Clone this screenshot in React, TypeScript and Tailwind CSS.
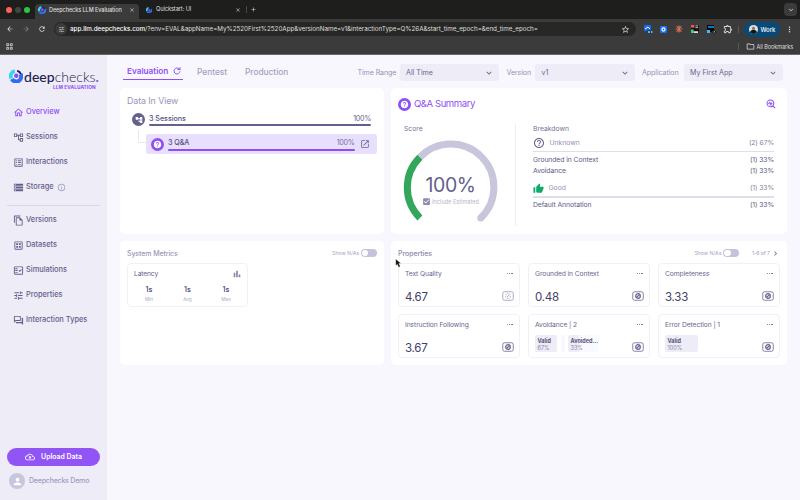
import React from "react";
import {
  MdOutlineHome, MdOutlineAccountTree, MdAccountTree, MdOutlineListAlt, MdStorage, MdInfoOutline, MdOutlineFileCopy,
  MdOutlineDataset, MdOutlineFactCheck, MdTune, MdOutlineQuestionAnswer, MdOutlineCloudUpload, MdPerson,
  MdOpenInNew, MdHelpOutline, MdThumbUp, MdRefresh, MdBarChart, MdChevronRight,
  MdKeyboardArrowDown, MdArrowBack, MdArrowForward, MdStarBorder, MdOutlineExtension, MdMoreVert,
  MdOutlineFolder, MdClose, MdAdd, MdCheckBox, MdHelp,
} from "react-icons/md";
import type { IconType } from "react-icons";

function Logo({ className }: { className: string }) {
  return (
    <svg viewBox="0 0 24 24" className={className} fill="none">
      <path d="M10 3.500A8.500 8.500 0 0 0 4 16" stroke="#35d5f2" strokeWidth="6.500" />
      <path d="M5 17A8.500 8.500 0 0 0 20 9" stroke="#2f6df0" strokeWidth="7" />
      <path d="M14 3.200A9 9 0 0 1 20.500 9" stroke="#221a63" strokeWidth="3.500" />
      <circle cx="12.500" cy="11.500" r="3.800" fill="#8d4df6" />
    </svg>
  );
}

function Reload({ className }: { className: string }) {
  return (
    <svg viewBox="0 0 24 24" className={className} fill="none" stroke="currentColor" strokeWidth="3" strokeLinecap="round" strokeLinejoin="round">
      <path d="M21 14a9 9 0 1 1-2.500-8.500L21 8" /><path d="M21 2v6h-6" />
    </svg>
  );
}

function Chrome() {
  return (
    <header className="h-[55px] shrink-0 border-b border-[#686868] bg-[#3b3b3b] text-[#dedede]">
      <div className="flex h-[19px] items-start bg-[#1e1f1c]">
        <div className="flex h-[19px] w-[35px] items-center gap-[3px] pl-[6px]">
          <i className="size-[6px] rounded-full bg-[#ff5f57]" />
          <i className="size-[6px] rounded-full bg-[#454545]" />
          <i className="size-[6px] rounded-full bg-[#28c840]" />
        </div>
        <div className="mt-[4px] flex h-[15px] w-[104px] items-center rounded-t-[4px] bg-[#3b3b3b] pb-[3px] pl-[3px]">
          <Logo className="size-[8px] shrink-0" />
          <span className="ml-[3px] w-[78px] text-[5.500px] tracking-[-0.060px] font-medium whitespace-nowrap">Deepchecks LLM Evaluation</span>
          <MdClose className="ml-[1.500px] size-[6px] shrink-0" />
        </div>
        <div className="flex h-[19px] w-[107px] items-center pl-[7px]">
          <Logo className="size-[6px]" />
          <span className="ml-[4px] w-[79px] text-[5.700px] tracking-[-0.100px] whitespace-nowrap">Quickstart: UI</span>
          <MdClose className="size-[6px]" />
        </div>
        <div className="mt-[6px] h-[7px] w-px bg-[#484848]" />
        <MdAdd className="mt-[6px] ml-[3px] size-[7px]" />
        <div className="mt-[3px] mr-[3px] ml-auto flex size-[13px] items-center justify-center rounded-[4px] bg-[#3b3b3b]">
          <MdKeyboardArrowDown className="size-[8px]" />
        </div>
      </div>
      <div className="flex h-[20px] items-center">
        <MdArrowBack className="ml-[6px] size-[8px] shrink-0" />
        <MdArrowForward className="ml-[8px] size-[8px] shrink-0 text-[#858585]" />
        <MdRefresh className="ml-[8px] size-[8px] shrink-0" />
        <div className="ml-[8px] flex h-[14.500px] w-[582px] shrink-0 items-center rounded-full bg-[#272725]">
          <span className="ml-px flex size-[12px] items-center justify-center rounded-full bg-[#3b3b3b]"><MdTune className="size-[7px]" /></span>
          <span className="ml-[3px] pt-px text-[6.300px] tracking-[-0.030px] whitespace-nowrap"><b className="font-medium text-white">app.llm.deepchecks.com</b>/?env=EVAL&amp;appName=My%2520First%2520App&amp;versionName=v1&amp;interactionType=Q%26A&amp;start_time_epoch=&amp;end_time_epoch=</span>
          <MdStarBorder className="mr-[6px] ml-auto size-[9px]" />
        </div>
        <div className="ml-[8px] flex shrink-0 items-center gap-[8px]">
          <svg viewBox="0 0 9 9" className="size-[9px]"><rect width="7" height="6" fill="#1769e8" /><path d="m1 4 3-2 2 2" fill="none" stroke="#fff" /><rect x="3" y="5" width="6" height="4" rx="1" fill="#13466c" /><path d="M4 7h2m1 0h1.500" stroke="#fff" /></svg>
          <svg viewBox="0 0 9 9" className="-ml-px size-[7px]"><rect width="9" height="9" rx="1.500" fill="#1670f6" /><circle cx="4.500" cy="4.500" r="2" fill="none" stroke="#fff" strokeWidth="1.500" /></svg>
          <svg viewBox="0 0 9 9" className="size-[8px]" stroke="#d97455" strokeWidth="1"><path d="M4.500.5v8M.5 4.500h8M1.500 1.500l6 6M7.500 1.500l-6 6M3 1l3 7M6 1 3 8" /></svg>
          <svg viewBox="0 0 9 9" className="size-[8px]"><rect width="9" height="9" fill="#101010" /><path d="M0 0h4v3H0z" fill="#ef5350" /><path d="M5 1h3M5 3h3" stroke="#ddd" /><path d="M0 5h3v4H0z" fill="#42cf83" /><path d="M3 7h5v2H3z" fill="#e6e0cf" /></svg>
          <svg viewBox="0 0 9 9" className="size-[9px]"><rect width="7" height="7" fill="#08090a" /><path d="M1 2h6" stroke="#1e9bf0" strokeWidth="1.500" /><path d="M0 5h3v3H0z" fill="#38bdf8" /><circle cx="7" cy="6.500" r="2" fill="#111" /><path d="m6 6.500 1 1 1-2" fill="none" stroke="#fff" strokeWidth=".6" /></svg>
          <MdOutlineExtension className="-ml-px size-[10px]" />
        </div>
        <i className="ml-[5px] h-[7px] w-px shrink-0 bg-[#575757]" />
        <div className="ml-[5px] flex h-[15px] w-[36px] shrink-0 items-center rounded-full bg-[#074a78] pl-[4.500px]">
          <svg viewBox="0 0 10 10" className="size-[9px] shrink-0"><circle cx="5" cy="5" r="5" fill="#e2e2e2" /><path d="M1 8C3 4 7 4 9 8A5 5 0 0 1 1 8" fill="#151515" /><circle cx="5" cy="3.500" r="1.700" fill="#967566" /></svg>
          <span className="ml-[3px] text-[6px] tracking-[-0.100px] font-medium text-white">Work</span>
        </div>
        <MdMoreVert className="ml-[5px] size-[9px] shrink-0" />
      </div>
      <div className="flex h-[15px] items-center pr-[7px] pl-[6px]">
        <svg viewBox="0 0 8 8" className="size-[7px]" fill="none" stroke="currentColor" strokeWidth=".9"><path d="M.8.800h2.200v2.200H.8zM5 .800h2.200v2.200H5zM.8 5h2.200v2.200H.8zM5 5h2.200v2.200H5z" /></svg>
        <i className="ml-auto h-[7px] w-px bg-[#575757]" />
        <MdOutlineFolder className="ml-[7px] size-[9px]" />
        <span className="ml-[2px] pt-px text-[5.500px] tracking-[-0.060px]">All Bookmarks</span>
      </div>
    </header>
  );
}

function NavItem({ icon: Icon, label, active, info }: { icon: IconType; label: string; active?: boolean; info?: boolean }) {
  return (
    <div className={`flex h-[25px] items-center pl-[13px] text-[7.400px] font-medium ${active ? "text-[#8f4ff5]" : "text-[#63608d]"}`}>
      <Icon className="size-[11px]" />
      <span className="ml-[2px] whitespace-nowrap">{label}</span>
      {info && <MdInfoOutline className="ml-[3px] size-[9px] text-[#9b99bd]" />}
    </div>
  );
}

function Sidebar() {
  return (
    <aside className="flex w-[107px] shrink-0 flex-col bg-[#eeecf6]">
      <div className="flex h-[44.500px] shrink-0 pt-[14px] pl-[9px]">
        <Logo className="size-[14px]" />
        <div className="ml-px">
          <div className="h-[14px] pt-px font-['Lato'] text-[14px] leading-[14px] tracking-[0.020px] whitespace-nowrap text-[#24204d]"><span className="font-medium">deep</span><span className="font-light">checks</span><b className="text-[#8f4ff5]">.</b></div>
          <div className="pl-[29px] pt-px text-[4.800px] leading-[6px] font-bold tracking-[0.060px] whitespace-nowrap text-[#8f4ff5]">LLM EVALUATION</div>
        </div>
      </div>
      <NavItem icon={MdOutlineHome} label="Overview" active />
      <NavItem icon={MdOutlineAccountTree} label="Sessions" />
      <NavItem icon={MdOutlineListAlt} label="Interactions" />
      <NavItem icon={MdStorage} label="Storage" info />
      <hr className="mx-[7px] mt-[5px] mb-[2px] border-[#d9d7e9]" />
      <NavItem icon={MdOutlineFileCopy} label="Versions" />
      <NavItem icon={MdOutlineDataset} label="Datasets" />
      <NavItem icon={MdOutlineFactCheck} label="Simulations" />
      <NavItem icon={MdTune} label="Properties" />
      <NavItem icon={MdOutlineQuestionAnswer} label="Interaction Types" />
      <div className="mt-auto ml-[7px] flex h-[18px] w-[93px] shrink-0 items-center justify-center gap-[6px] rounded-full bg-[#9155f6] text-[6.900px] font-semibold text-white">
        <MdOutlineCloudUpload className="size-[10px]" />Upload Data
      </div>
      <div className="mt-[7px] mb-[11px] ml-[9px] flex h-[16px] shrink-0 items-center">
        <span className="flex size-[16px] items-center justify-center rounded-full bg-[#c8c6dc] text-white"><MdPerson className="size-[11px]" /></span>
        <span className="ml-[4px] pt-px text-[7px] tracking-[-0.200px] font-medium whitespace-nowrap text-[#9d9bbd]">Deepchecks Demo</span>
      </div>
    </aside>
  );
}

function Select({ label, value, width }: { label: string; value: string; width: string }) {
  return (
    <div className="flex items-center">
      <span className={`mr-[4px] pt-px text-[7.100px] tracking-[-0.100px] whitespace-nowrap text-[#9492b4] ${width}`}>{label}</span>
      <div className="flex h-[17px] w-[99.500px] items-center justify-between rounded-[3px] bg-[#eeecf6] pr-[5px] pl-[6.500px] text-[7.100px] text-[#69668f]"><span className="pt-px">{value}</span><MdKeyboardArrowDown className="size-[10px]" /></div>
    </div>
  );
}

function QBadge() {
  return <span className="flex size-[13px] shrink-0 items-center justify-center rounded-full bg-[#8f4ff5] text-white"><MdHelp className="size-[9px]" /></span>;
}

function Toggle() {
  return (
    <div className="flex items-center text-[5.200px] text-[#a8a6c5]"><span className="pt-px tracking-[-0.020px]">Show N/As</span><span className="ml-[2px] flex h-[8px] w-[16px] items-center rounded-full bg-[#c5c3db] pl-[0.800px]"><i className="size-[6.500px] rounded-full bg-white" /></span></div>
  );
}

function DataInView() {
  return (
    <section className="h-[146px] rounded-[5px] bg-white px-[7px] pt-[7px]">
      <h2 className="h-[12px] text-[8.900px] leading-[12px] tracking-[-0.100px] text-[#9997b7]">Data In View</h2>
      <div className="mt-[6px] flex h-[13px] pl-[5px]">
        <span className="flex size-[13px] items-center justify-center rounded-full bg-[#63608d] text-white"><MdAccountTree className="size-[8px]" /></span>
        <div className="ml-[4px] w-[222px]">
          <div className="flex h-[11px] justify-between text-[7.200px] leading-[11px] text-[#69668f]"><span className="font-medium tracking-[-0.050px] text-[#56527d]">3 Sessions</span><span className="tracking-[-0.300px]">100%</span></div>
          <div className="h-[2px] rounded-full bg-[#63608d]" />
        </div>
      </div>
      <div className="flex">
        <i className="mt-[4px] ml-[11px] h-[13px] w-[8px] border-b border-l border-[#e9e7f3]" />
        <div className="mt-[8px] flex h-[20px] w-[231px] items-center rounded-[3px] bg-[#e8defe] pl-[5px]">
          <QBadge />
          <div className="ml-[4px] w-[186.500px] pt-px">
            <div className="flex h-[10px] justify-between text-[7.200px] leading-[8px] text-[#77739d]"><span className="font-medium tracking-[-0.100px] text-[#56527d]">3 Q&amp;A</span><span className="tracking-[-0.300px]">100%</span></div>
            <div className="h-[2px] rounded-full bg-[#8f4ff5]" />
          </div>
          <MdOpenInNew className="ml-[5px] size-[10px] text-[#69668f]" />
        </div>
      </div>
    </section>
  );
}

function Line({ name, value }: { name: string; value: string }) {
  return <div className="flex h-[11px] items-center justify-between text-[6.800px] tracking-[-0.070px] text-[#5e5a87]"><span>{name}</span><span className="tracking-[-0.100px]">{value}</span></div>;
}

function Summary() {
  return (
    <section className="h-[146px] rounded-[5px] bg-white px-[7px] pt-[9px]">
      <div className="flex h-[14px] items-center"><QBadge /><h2 className="ml-[3px] pt-px text-[9.600px] tracking-[-0.470px] text-[#8f4ff5]">Q&amp;A Summary</h2>
        <svg viewBox="0 0 24 24" className="mr-[4px] ml-auto size-[10px]" fill="none" stroke="#9155f6" strokeWidth="2.600"><circle cx="10.500" cy="10.500" r="8" /><path d="m17 17 5 5M6 12l3-4 3 4 3-3" /><path d="M9 14h5" /></svg>
      </div>
      <div className="mt-[13px] flex">
        <div className="w-[118px] border-r border-[#eeedf5]">
          <div className="h-[10px] pl-[6px] text-[6.800px] leading-[10px] text-[#77749c]">Score</div>
          <div className="mt-[5.500px] ml-[5px] grid h-[86px] w-[95px] place-items-center">
            <svg viewBox="403 139 95 86" className="col-start-1 row-start-1 h-[86px] w-[95px]" fill="none" strokeWidth="7">
              <path d="M419.900 156.200A43 43 0 1 1 480.700 217" stroke="#c8c6dc" />
              <circle cx="480.700" cy="217" r="3.500" fill="#c8c6dc" strokeWidth="0" />
              <path d="M419.900 217A43 43 0 0 1 419.900 156.200" stroke="#32a65a" />
            </svg>
            <div className="col-start-1 row-start-1 pt-[16px] text-center">
              <div className="text-[19.500px] leading-[20px] tracking-[-0.400px] text-[#63608d]">100%</div>
              <div className="mt-[2.500px] flex items-center text-[5.600px] leading-[8px] whitespace-nowrap text-[#b6b4ce]"><MdCheckBox className="mr-[1px] size-[9px] text-[#8c89af]" />Include Estimated</div>
            </div>
          </div>
        </div>
        <div className="ml-[17px] w-[241px]">
          <div className="h-[10px] text-[6.800px] leading-[10px] text-[#77749c]">Breakdown</div>
          <div className="mt-[2.500px] flex h-[13px] items-center text-[6.800px] text-[#9593b5]"><MdHelpOutline className="mr-[4.500px] size-[12px] text-[#63608d]" /><span className="pt-px">Unknown</span><span className="ml-auto pt-px tracking-[-0.100px] text-[#85829f]">(2) 67%</span></div>
          <div className="mt-[1px] mb-[2.500px] h-[1.500px] bg-[#dfdde9]" />
          <Line name="Grounded in Context" value="(1) 33%" />
          <Line name="Avoidance" value="(1) 33%" />
          <div className="mt-[5.500px] flex h-[13px] items-center text-[6.800px] text-[#9593b5]"><MdThumbUp className="mr-[4.500px] size-[11px] text-[#0fa968]" />Good<span className="ml-auto tracking-[-0.100px] text-[#85829f]">(1) 33%</span></div>
          <div className="mt-[1px] mb-[2.500px] h-[1.500px] bg-[#dfdde9]" />
          <Line name="Default Annotation" value="(1) 33%" />
        </div>
      </div>
    </section>
  );
}

function SystemMetrics() {
  return (
    <section className="h-[124px] rounded-[5px] bg-white px-[7px] pt-[7px]">
      <div className="flex h-[10px] items-center justify-between"><h2 className="pt-[1.500px] text-[7px] font-medium tracking-[-0.100px] text-[#9997b7]">System Metrics</h2><Toggle /></div>
      <div className="mt-[5px] h-[44px] w-[121px] rounded-[4px] border border-[#f1f0f8] px-[6px] pt-[4px]">
        <div className="flex h-[12px] items-center justify-between text-[6.700px] tracking-[-0.130px] text-[#63608d]"><span className="pt-px">Latency</span><MdBarChart className="-mr-px size-[10px] text-[#8885ad]" /></div>
        <div className="mt-[4.500px] flex justify-between px-[10px] text-center">
          {["Min", "Avg", "Max"].map((l) => <div key={l} className="w-[10px]"><div className="text-[7px] leading-[10px] font-semibold text-[#56527d]">1s</div><div className="text-[4.700px] leading-[8px] text-[#aaa8c6]">{l}</div></div>)}
        </div>
      </div>
    </section>
  );
}

function TypeBadge({ pale }: { pale?: boolean }) {
  return (
    <svg viewBox="0 0 24 20" className="h-[10px] w-[12px]" fill="none" stroke={pale ? "#9895b8" : "#69668f"} strokeWidth="1.600">
      <rect x="1.500" y="1.500" width="21" height="17" rx="3.500" />
      {pale ? <><circle cx="12" cy="10" r="5" strokeDasharray="4 2" strokeWidth="1.300" /><path d="m10 12 4-4" /></> : <><circle cx="12" cy="10" r="4.600" strokeWidth="2.600" /><path d="m9 13 6-6" strokeWidth="2.200" /></>}
    </svg>
  );
}

function MoreDots() {
  return (
    <span className="flex gap-px pr-px">
      <i className="h-[1.500px] w-[1.300px] rounded-full bg-[#69668f]" />
      <i className="h-[1.500px] w-[1.300px] rounded-full bg-[#69668f]" />
      <i className="h-[1.500px] w-[1.300px] rounded-full bg-[#69668f]" />
    </span>
  );
}

interface Prop { title: string; value?: string; pale?: boolean; chips?: string[][] }
const properties: Prop[] = [
  { title: "Text Quality", value: "4.67", pale: true },
  { title: "Grounded in Context", value: "0.48" },
  { title: "Completeness", value: "3.33" },
  { title: "Instruction Following", value: "3.67" },
  { title: "Avoidance | 2", chips: [["Valid", "67%"], ["Avoided...", "33%"]] },
  { title: "Error Detection | 1", chips: [["Valid", "100%"]] },
];

function PropertyCard({ title, value, pale, chips }: Prop) {
  return (
    <div className="h-[44px] rounded-[4px] border border-[#f1f0f8] pr-[5.500px] pl-[6px]">
      <div className="mt-[3px] flex h-[13px] items-center justify-between text-[6.700px] tracking-[-0.080px] text-[#69668f]"><span className="pt-px">{title}</span><MoreDots /></div>
      <div className="flex h-[24px] items-center justify-between">
        {value && <span className="pt-[9.500px] text-[11.500px] leading-[14px] tracking-[-0.250px] text-[#444069]">{value}</span>}
        {chips && (
          <div className={`flex pt-px ${chips.length > 1 ? "gap-[3.500px]" : ""}`}>
            {chips.map(([n, p], i) => (
              <React.Fragment key={n}>
                {i > 0 && <i className="h-[17px] w-[4px] bg-[#f8f7fc]" />}
                <div className={`h-[17.500px] rounded-[2px] pl-[2.500px] pt-[3px] text-[5.500px] leading-[7px] whitespace-nowrap text-[#8885a5] ${chips.length === 1 ? "w-[33px] bg-[#eeecf6]" : i === 0 ? "w-[22px] bg-[#eeecf6]" : "w-[31px] bg-linear-to-r from-[#eeecf6] from-35% to-[#faf9fd] to-35%"}`}><b className="block font-bold text-[#56527d]">{n}</b>{p}</div>
              </React.Fragment>
            ))}
          </div>
        )}
        <span className="flex pt-[8.500px]"><TypeBadge pale={pale} /></span>
      </div>
    </div>
  );
}

function Properties() {
  return (
    <section className="h-[124px] rounded-[5px] bg-white px-[7px] pt-[7px]">
      <div className="flex h-[10px] items-center"><h2 className="mr-auto pt-[1.500px] text-[7px] font-medium tracking-[-0.050px] text-[#8c89af]">Properties</h2><Toggle /><span className="ml-[12.500px] pt-px text-[5.200px] tracking-[-0.060px] text-[#a09ebc]">1-6 of 7</span><MdChevronRight className="ml-[1px] size-[9px] text-[#69668f]" /></div>
      <div className="mt-[5px] grid grid-cols-3 gap-x-[8px] gap-y-[7px]">{properties.map((p) => <PropertyCard key={p.title} {...p} />)}</div>
    </section>
  );
}

export default function App() {
  return (
    <div className="flex h-[500px] w-[800px] flex-col overflow-hidden bg-[#f8f7fe] font-['Inter',sans-serif]">
      <Chrome />
      <div className="flex min-h-0 flex-1">
        <Sidebar />
        <main className="flex-1 pr-[13px] pl-[13px]">
          <div className="flex h-[33px] items-center">
            <div className="mt-[8px] ml-[3px] flex h-[17px] w-[60px] items-center justify-between self-start border-b-[1.500px] border-[#8f4ff5] pr-[2px] pl-[4px] text-[8.200px] font-semibold text-[#8f4ff5]"><span className="pt-px">Evaluation</span><Reload className="size-[8px]" /></div>
            <span className="ml-[14px] pt-[2px] text-[8.300px] font-medium text-[#a3a1c0]">Pentest</span>
            <span className="ml-[18px] pt-[2px] text-[8.300px] font-medium text-[#a3a1c0]">Production</span>
            <div className="mr-[4px] ml-auto flex gap-[7.500px] pt-[2px]">
              <Select label="Time Range" value="All Time" width="w-[38px]" /><Select label="Version" value="v1" width="w-[24.500px]" /><Select label="Application" value="My First App" width="w-[37.500px]" />
            </div>
          </div>
          <div className="grid grid-cols-[264px_396px] gap-[7px]">
            <DataInView /><Summary /><SystemMetrics /><Properties />
          </div>
        </main>
      </div>
      <svg viewBox="0 0 8 12" className="absolute top-[259px] left-[395px] h-[9px] w-[6px]"><path d="M1 0v9l2-2 2 4 2-1-2-4h3z" fill="#111" stroke="#fff" strokeWidth=".4" /></svg>
    </div>
  );
}
